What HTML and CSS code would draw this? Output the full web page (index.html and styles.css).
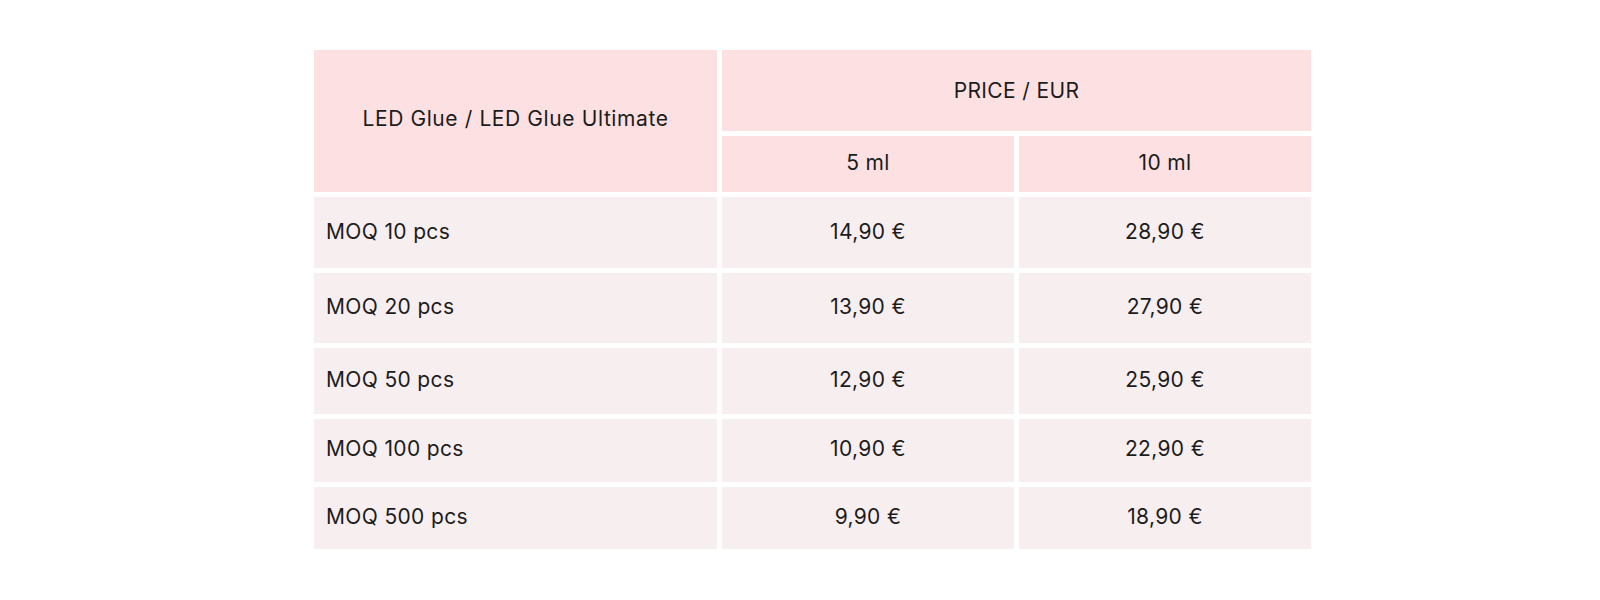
FILE: index.html
```html
<!DOCTYPE html>
<html lang="en">
<head>
<meta charset="utf-8">
<title>LED Glue price table</title>
<link rel="stylesheet" href="styles.css">
</head>
<body>
<div class="price-table">
  <div class="cell head product">LED Glue / LED Glue Ultimate</div>
  <div class="cell head price">PRICE / EUR</div>
  <div class="cell head size">5 ml</div>
  <div class="cell head size">10 ml</div>

  <div class="cell label">MOQ 10 pcs</div>
  <div class="cell value">14,90 €</div>
  <div class="cell value">28,90 €</div>

  <div class="cell label">MOQ 20 pcs</div>
  <div class="cell value">13,90 €</div>
  <div class="cell value">27,90 €</div>

  <div class="cell label">MOQ 50 pcs</div>
  <div class="cell value">12,90 €</div>
  <div class="cell value">25,90 €</div>

  <div class="cell label">MOQ 100 pcs</div>
  <div class="cell value">10,90 €</div>
  <div class="cell value">22,90 €</div>

  <div class="cell label">MOQ 500 pcs</div>
  <div class="cell value">9,90 €</div>
  <div class="cell value">18,90 €</div>
</div>
</body>
</html>
```

FILE: styles.css
```css
html, body {
  margin: 0;
  padding: 0;
  background: #ffffff;
}

body {
  font-family: "Inter", "Liberation Sans", sans-serif;
  color: #1c1c1c;
}

.price-table {
  display: grid;
  grid-template-columns: 403px 292px 292px;
  grid-template-rows: 80.5px 56.5px 71px 69.5px 66px 63px 62.5px;
  gap: 5px;
  width: 997px;
  margin: 50px 0 0 314px;
}

.cell {
  display: flex;
  align-items: center;
  justify-content: center;
  padding-bottom: 3px;
  box-sizing: border-box;
  font-size: 21px;
  font-weight: 400;
  letter-spacing: 0.35px;
  background: #f7eeef;
}

.head {
  background: #fde1e2;
}

.product {
  grid-row: 1 / span 2;
  padding-bottom: 6px;
  letter-spacing: 0.6px;
}

.price {
  grid-column: 2 / span 2;
  padding-bottom: 0;
}

.label {
  justify-content: flex-start;
  padding-left: 12px;
}
```
